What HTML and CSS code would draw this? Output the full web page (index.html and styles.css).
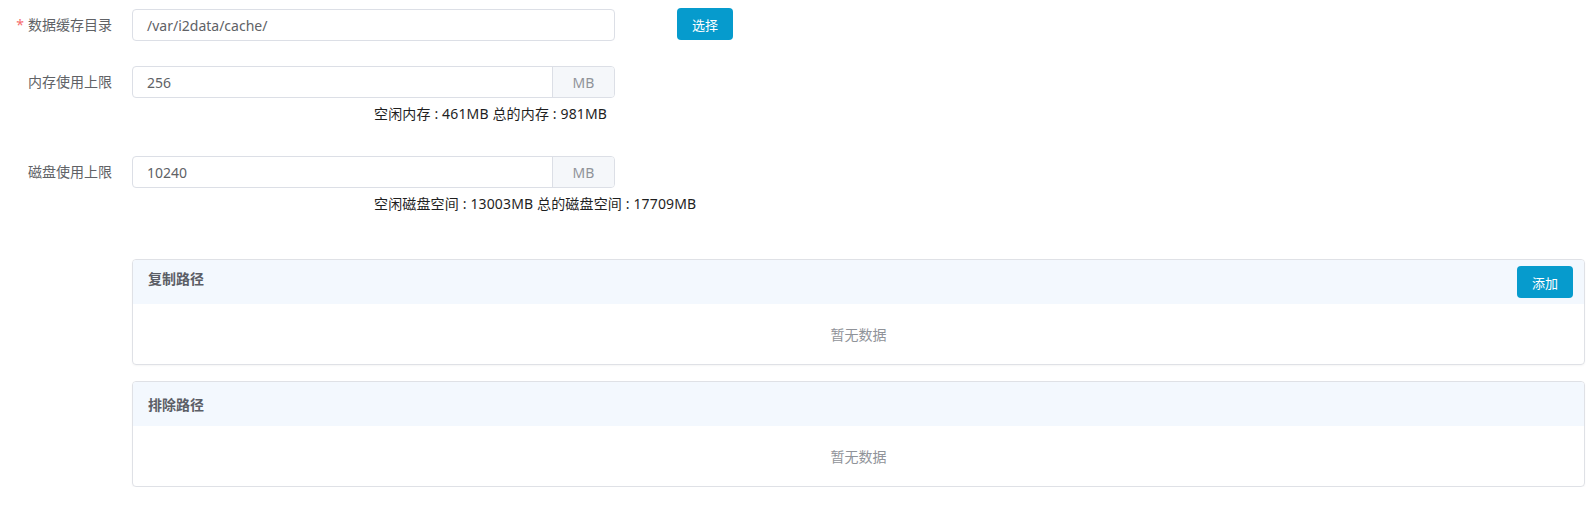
FILE: index.html
```html
<!DOCTYPE html>
<html lang="zh-CN">
<head>
<meta charset="utf-8">
<title>缓存设置</title>
<link rel="stylesheet" href="styles.css">
</head>
<body>
<div class="form">
  <div class="row row-first">
    <label class="label"><span class="req">*</span>数据缓存目录</label>
    <div class="field">
      <div class="input"><span class="value">/var/i2data/cache/</span></div>
    </div>
    <button class="btn btn-choose">选择</button>
  </div>

  <div class="row row-mem">
    <label class="label">内存使用上限</label>
    <div class="field">
      <div class="input group"><span class="value">256</span><span class="addon">MB</span></div>
      <div class="info">空闲内存 : 461MB 总的内存 : 981MB</div>
    </div>
  </div>

  <div class="row row-disk">
    <label class="label">磁盘使用上限</label>
    <div class="field">
      <div class="input group"><span class="value">10240</span><span class="addon">MB</span></div>
      <div class="info">空闲磁盘空间 : 13003MB 总的磁盘空间 : 17709MB</div>
    </div>
  </div>

  <div class="panels">
    <section class="panel">
      <header class="panel-head panel-head-btn">
        <span class="panel-title title-raised">复制路径</span>
        <button class="btn">添加</button>
      </header>
      <div class="panel-body">暂无数据</div>
    </section>
    <section class="panel">
      <header class="panel-head">
        <span class="panel-title">排除路径</span>
      </header>
      <div class="panel-body">暂无数据</div>
    </section>
  </div>
</div>
</body>
</html>
```

FILE: styles.css
```css
* { box-sizing: border-box; }
html, body {
  margin: 0;
  padding: 0;
  background: #ffffff;
}
body {
  font-family: "Noto Sans", "Noto Sans CJK SC", sans-serif;
  font-size: 14px;
  color: #606266;
}
.form {
  padding: 0 9px 0 0;
}
.row {
  display: flex;
  align-items: flex-start;
}
.row-first { padding-top: 9px; }
.row-mem { margin-top: 25px; }
.row-disk { margin-top: 32px; }

.label {
  width: 132px;
  flex: none;
  text-align: right;
  padding-right: 20px;
  line-height: 32px;
  color: #606266;
  white-space: nowrap;
}
.req {
  color: #f56c6c;
  margin-right: 4px;
}
.field {
  width: 483px;
  flex: none;
}
.input {
  height: 32px;
  border: 1px solid #dcdfe6;
  border-radius: 4px;
  background: #fff;
  display: flex;
  align-items: center;
  overflow: hidden;
}
.value {
  flex: 1;
  padding-left: 14px;
  color: #606266;
}
.addon {
  width: 62px;
  height: 100%;
  flex: none;
  background: #f5f7fa;
  border-left: 1px solid #dcdfe6;
  color: #909399;
  display: flex;
  align-items: center;
  justify-content: center;
}
.info {
  margin-top: 6px;
  padding-left: 242px;
  line-height: 20px;
  color: #1f1f1f;
  white-space: nowrap;
  letter-spacing: 0.15px;
}
.btn {
  height: 32px;
  width: 56px;
  border: none;
  border-radius: 4px;
  background: #069bcd;
  color: #ffffff;
  font-family: inherit;
  font-size: 13px;
  padding: 0;
  cursor: pointer;
}
.btn-choose {
  margin-left: 62px;
  margin-top: -1px;
}

.panels {
  margin-left: 132px;
  margin-top: 45px;
  display: flex;
  flex-direction: column;
  gap: 16px;
}
.panel {
  border: 1px solid #dfe1e6;
  border-radius: 4px;
  overflow: hidden;
  box-shadow: 0 1px 2px rgba(0,0,0,0.04);
}
.panel-head {
  height: 44px;
  background: #f3f8fe;
  display: flex;
  align-items: center;
  justify-content: space-between;
  padding: 0 11px 0 15px;
}
.panel-title {
  font-weight: bold;
  color: #5b5e66;
}
.title-raised {
  position: relative;
  top: -4px;
}
.panel-body {
  height: 60px;
  display: flex;
  align-items: center;
  justify-content: center;
  color: #909399;
}
```
